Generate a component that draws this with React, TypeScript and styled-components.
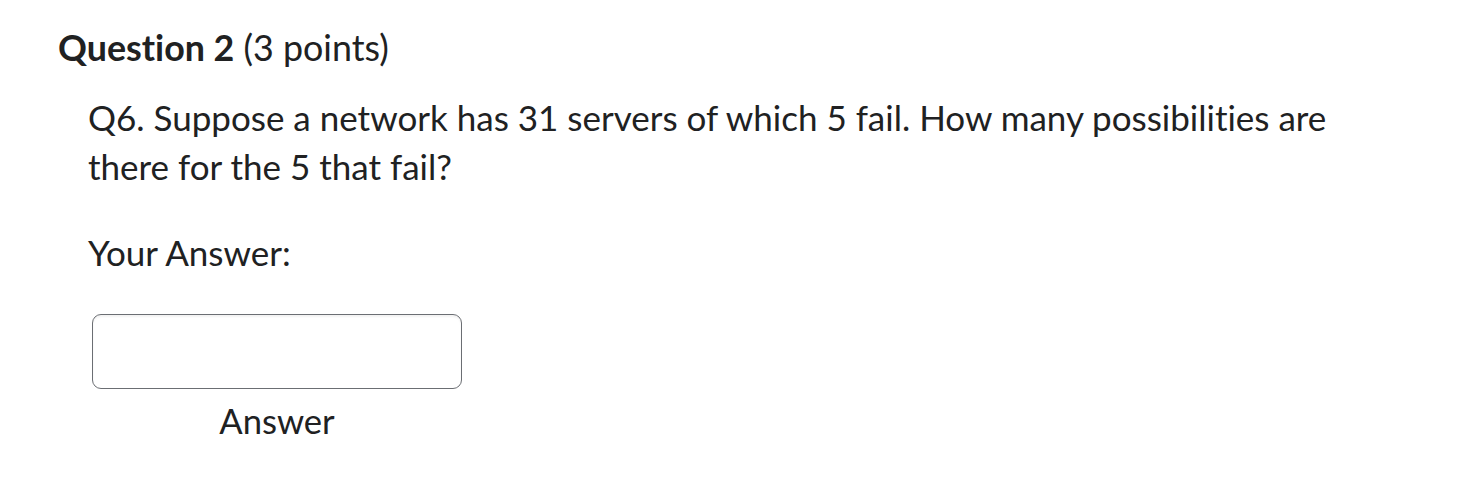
import React from "react";
import styled, { createGlobalStyle } from "styled-components";

const Global = createGlobalStyle`
  html, body { margin: 0; padding: 0; background: #fff; }
  body {
    font-family: Lato, "Open Sans", sans-serif;
    color: #202122;
    font-variant-ligatures: none;
    font-feature-settings: "liga" 0, "clig" 0;
  }
`;

const Page = styled.div`
  width: 1480px;
  height: 488px;
  box-sizing: border-box;
  padding: 24px 58px 0;
`;

const Heading = styled.h2`
  margin: 0;
  font-size: 35.8px;
  line-height: 48px;
  font-weight: 400;
`;

const Strong = styled.span`
  font-weight: 700;
`;

const Body = styled.div`
  padding: 21px 30px 0;
  font-size: 35px;
  line-height: 49px;
`;

const Paragraph = styled.p`
  margin: 0;
  max-width: 1270px;
`;

const Label = styled.p`
  margin: 37px 0 0;
`;

const Field = styled.div`
  display: flex;
  flex-direction: column;
  align-items: center;
  width: 370px;
  margin: 37px 0 0 4px;
`;

const Input = styled.input`
  width: 370px;
  height: 75px;
  box-sizing: border-box;
  border: 1px solid #6b6e73;
  border-radius: 9px;
  background: #fff;
  box-shadow: inset 0 2px 2px rgba(0, 0, 0, 0.05);
  outline: none;
`;

const Caption = styled.label`
  margin-top: 10px;
  font-size: 34.6px;
  line-height: 44px;
`;

export default function App() {
  return (
    <Page>
      <Global />
      <Heading>
        <Strong>Question 2</Strong> (3 points)
      </Heading>
      <Body>
        <Paragraph>
          Q6. Suppose a network has 31 servers of which 5 fail. How many possibilities are
          there for the 5 that fail?
        </Paragraph>
        <Label>Your Answer:</Label>
        <Field>
          <Input aria-label="Answer" />
          <Caption>Answer</Caption>
        </Field>
      </Body>
    </Page>
  );
}
